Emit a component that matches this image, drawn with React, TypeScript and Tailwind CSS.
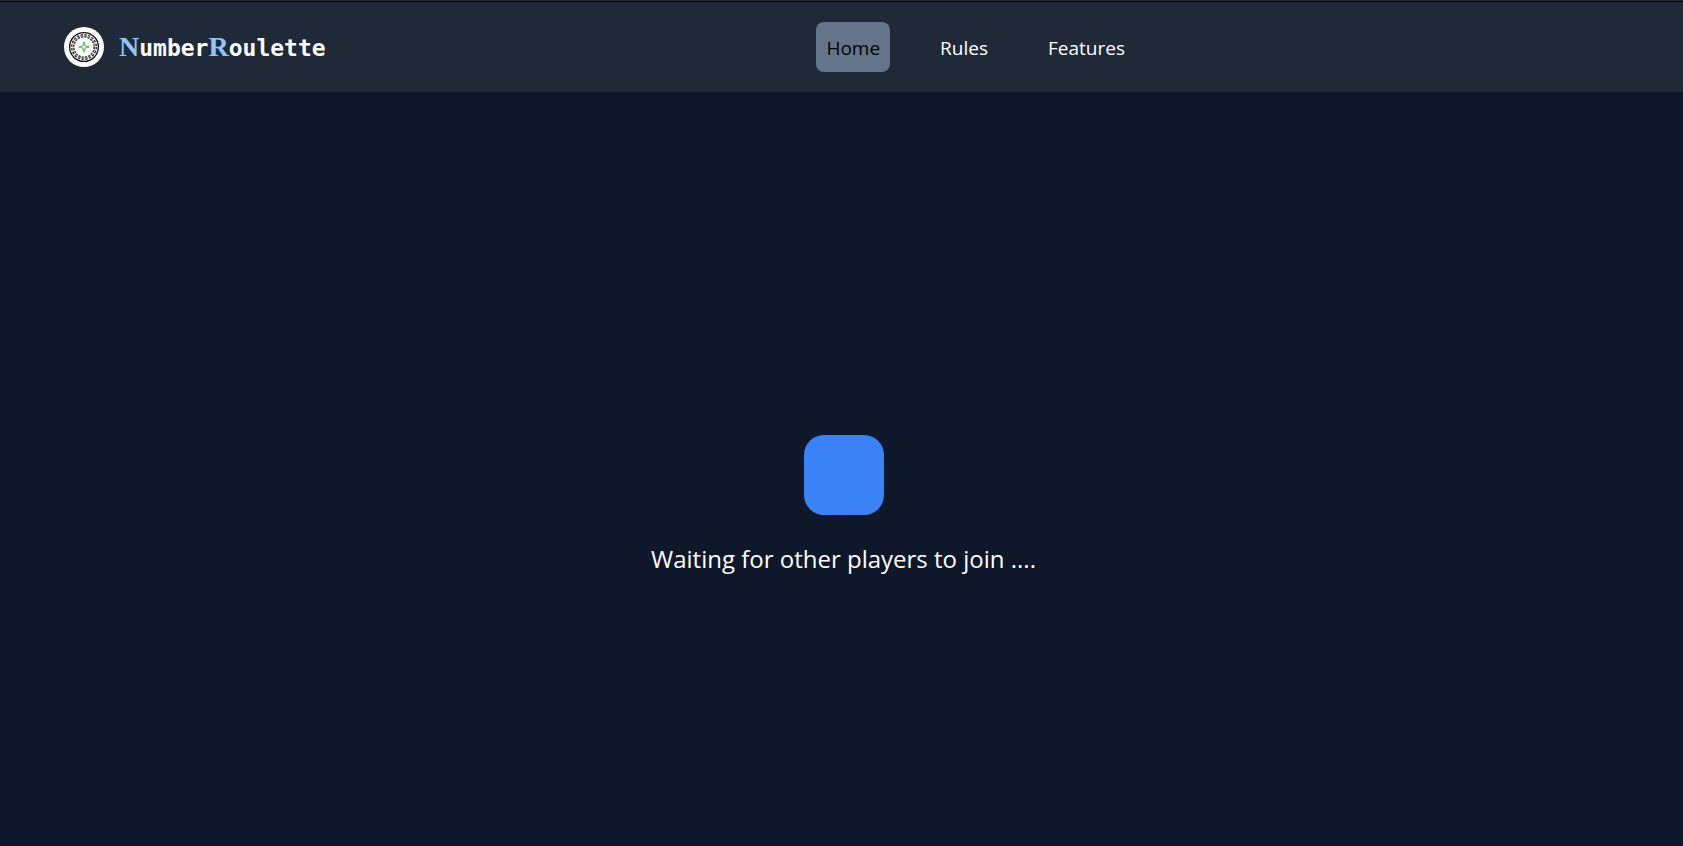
const NAV_LINKS = [
  { label: "Home", href: "#home", active: true },
  { label: "Rules", href: "#rules", active: false },
  { label: "Features", href: "#features", active: false },
];

function RouletteLogo() {
  return (
    <svg viewBox="0 0 40 40" className="size-10" aria-hidden="true">
      <circle cx="20" cy="20" r="20" fill="#ffffff" />
      <g fill="none">
        <circle cx="20" cy="20" r="14.4" strokeWidth="1.3" stroke="#111111" />
        <circle cx="20" cy="20" r="12.3" strokeWidth="1.5" strokeDasharray="2.5 1.36" stroke="#333333" />
        <circle cx="20" cy="20" r="10.2" strokeWidth="1.5" strokeDasharray="2.2 1" stroke="#3a3a3a" />
        <circle cx="20" cy="20" r="11.2" strokeWidth="0.5" stroke="#777777" />
      </g>
      <path
        d="M20 16 L21.3 18.7 L24 20 L21.3 21.3 L20 24 L18.7 21.3 L16 20 L18.7 18.7 Z"
        fill="none"
        stroke="#5cc065"
        strokeWidth="1.2"
      />
      <g fill="#5cc065">
        <circle cx="20" cy="15.5" r="0.9" />
        <circle cx="24.5" cy="20" r="0.9" />
        <circle cx="20" cy="24.5" r="0.9" />
        <circle cx="15.5" cy="20" r="0.9" />
      </g>
    </svg>
  );
}

function Initial({ children }: { children: string }) {
  return (
    <span className="font-['Liberation_Serif',serif] text-[28px] text-[#93c5fd]">{children}</span>
  );
}

function Header() {
  return (
    <header className="grid grid-cols-[15fr_16fr] items-start border-t border-black bg-[#1f2937] px-16 py-5">
      <a href="#home" className="flex items-center gap-[15px] justify-self-start pt-[5px]">
        <RouletteLogo />
        <span className="font-['DejaVu_Sans_Mono',monospace] text-[23px] leading-8 font-bold text-white">
          <Initial>N</Initial>umber<Initial>R</Initial>oulette
        </span>
      </a>
      <nav className="flex gap-10 text-[19px] leading-7">
        {NAV_LINKS.map((link) => (
          <a
            key={link.label}
            href={link.href}
            aria-current={link.active ? "page" : undefined}
            className={
              link.active
                ? "rounded-lg bg-[#64748b] px-[10px] pt-3 pb-[10px] text-black"
                : "rounded-lg px-[10px] pt-3 pb-[10px] text-white"
            }
          >
            {link.label}
          </a>
        ))}
      </nav>
    </header>
  );
}

export default function App() {
  return (
    <div className="flex min-h-screen flex-col border-t border-[#2b2a30] bg-[#0f172a] font-['Open_Sans','Noto_Sans',sans-serif]">
      <Header />
      <main className="flex grow flex-col items-center justify-center gap-7 pt-18 pl-1">
        <div className="size-20 rounded-[20px] bg-[#3b82f6]" />
        <p role="status" className="text-2xl text-white">
          Waiting for other players to join ....
        </p>
      </main>
    </div>
  );
}
